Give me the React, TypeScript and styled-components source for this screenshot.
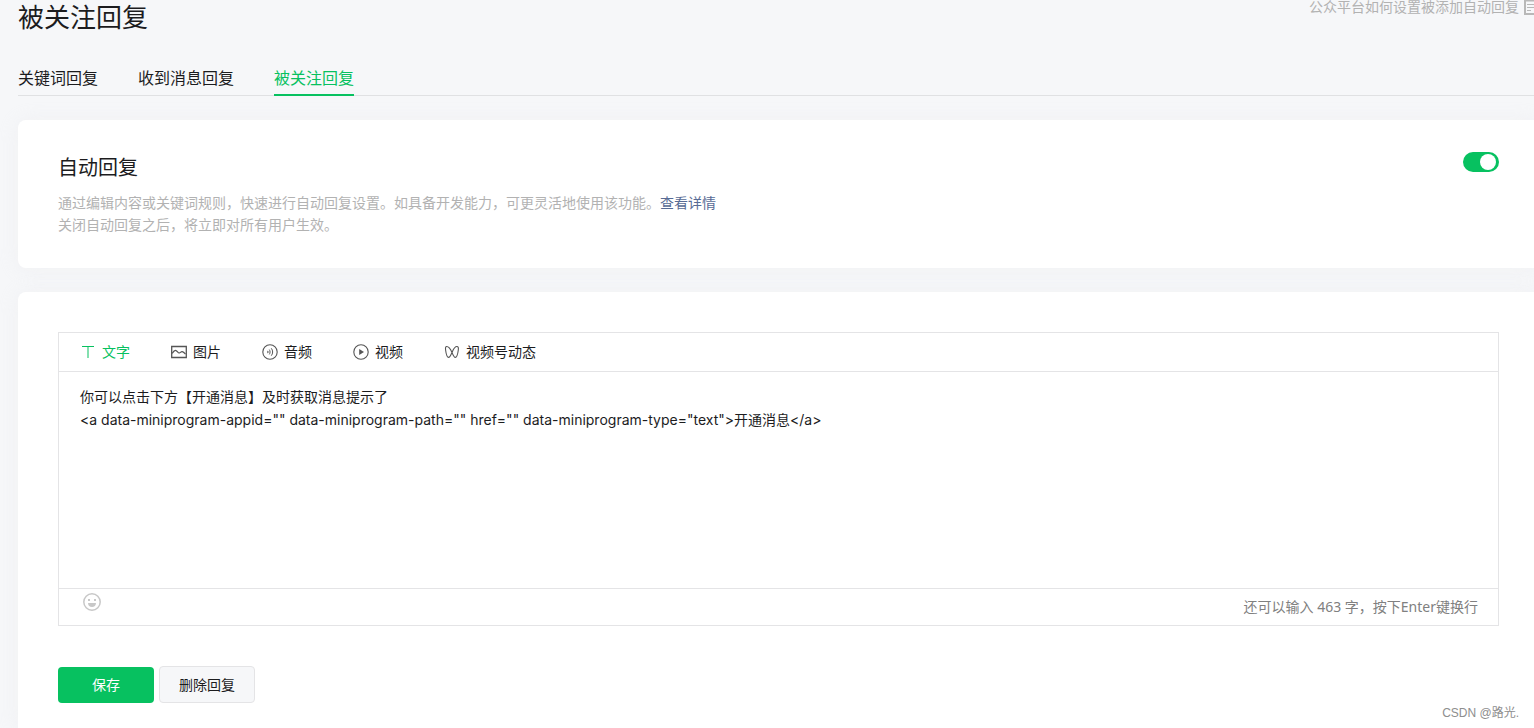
import React, { useState } from "react";
import styled, { createGlobalStyle } from "styled-components";

const green = "#07c160";
const line = "#e4e4e6";

const GlobalStyle = createGlobalStyle`
  * { box-sizing: border-box; }
  body {
    margin: 0;
    background: #f6f7f9;
    color: #1c1c1e;
    font-family: "Noto Sans", "Noto Sans CJK SC", sans-serif;
    font-size: 14px;
    line-height: 22px;
  }
  button, input, textarea { font: inherit; color: inherit; }
  a { text-decoration: none; }
`;

const Page = styled.div`
  position: relative;
  display: flex;
  flex-direction: column;
  min-height: 100vh;
  padding-left: 18px;
  overflow: hidden;
`;

const Header = styled.header`
  display: flex;
  justify-content: space-between;
  align-items: flex-start;
  height: 60px;
`;

const Title = styled.h1`
  margin: 0;
  font-size: 26px;
  line-height: 34px;
  font-weight: 400;
`;

const HelpLink = styled.a`
  display: flex;
  gap: 5px;
  color: #b2b2b2;
  line-height: 14px;
`;

const Tabs = styled.nav`
  display: flex;
  gap: 40px;
  height: 36px;
  border-bottom: 1px solid #e0e1e3;
`;

const Tab = styled.a<{ $active?: boolean }>`
  height: 36px;
  font-size: 16px;
  line-height: 36px;
  color: ${(p) => (p.$active ? green : "#1c1c1e")};
  border-bottom: ${(p) => (p.$active ? `2px solid ${green}` : "0")};
`;

const Card = styled.section`
  background: #fff;
  box-shadow: 0 1px 20px rgba(228, 228, 232, 0.3);
`;

const SettingCard = styled(Card)`
  display: flex;
  justify-content: space-between;
  align-items: flex-start;
  min-height: 148px;
  margin-top: 24px;
  padding: 32px 35px 32px 40px;
  border-radius: 8px 0 0 8px;
`;

const EditCard = styled(Card)`
  flex: 1;
  margin-top: 24px;
  padding: 40px 35px 25px 40px;
  border-radius: 8px 0 0 0;
`;

const CardTitle = styled.h2`
  margin: 0 0 8px;
  font-size: 20px;
  line-height: 32px;
  font-weight: 400;
`;

const Description = styled.p`
  margin: 0;
  color: #b2b2b2;
`;

const DetailLink = styled.a`
  color: #576b95;
`;

const Switch = styled.input`
  appearance: none;
  flex: none;
  width: 36px;
  height: 20px;
  margin: 0;
  padding: 2px 3px;
  display: flex;
  justify-content: flex-start;
  border-radius: 10px;
  background: #d8d8d8;
  cursor: pointer;
  &::before {
    content: "";
    width: 16px;
    height: 16px;
    border-radius: 50%;
    background: #fff;
  }
  &:checked {
    justify-content: flex-end;
    background: ${green};
  }
`;

const Editor = styled.div`
  border: 1px solid ${line};
`;

const Toolbar = styled.div`
  display: flex;
  gap: 41px;
  height: 39px;
  padding: 0 21px;
  border-bottom: 1px solid ${line};
`;

const Tool = styled.button<{ $active?: boolean }>`
  display: flex;
  align-items: center;
  gap: 6px;
  padding: 0;
  border: 0;
  background: none;
  white-space: nowrap;
  color: ${(p) => (p.$active ? green : "#1c1c1e")};
  cursor: pointer;
  svg { color: ${(p) => (p.$active ? green : "#555")}; }
`;

const TextArea = styled.textarea`
  display: block;
  width: 100%;
  height: 216px;
  padding: 13px 21px;
  border: 0;
  outline: 0;
  resize: none;
  background: #fff;
  font-family: Inter, "Noto Sans CJK SC", sans-serif;
  line-height: 23px;
`;

const EditorFooter = styled.div`
  display: flex;
  justify-content: space-between;
  height: 37px;
  padding: 4px 20px 0 24px;
  border-top: 1px solid ${line};
  color: #808080;
  line-height: 28px;
`;

const EmojiButton = styled.button`
  width: 18px;
  height: 18px;
  padding: 0;
  border: 0;
  background: none;
  svg { display: block; }
`;

const Actions = styled.div`
  display: flex;
  align-items: flex-end;
  gap: 5px;
  margin-top: 40px;
`;

const Button = styled.button<{ $primary?: boolean }>`
  width: 96px;
  height: ${(p) => (p.$primary ? "36px" : "37px")};
  padding: 0;
  border: ${(p) => (p.$primary ? "0" : `1px solid ${line}`)};
  border-radius: 4px;
  background: ${(p) => (p.$primary ? green : "#f6f7f9")};
  color: ${(p) => (p.$primary ? "#fff" : "#1c1c1e")};
  cursor: pointer;
`;

const Watermark = styled.span`
  position: absolute;
  right: 15px;
  bottom: 5px;
  color: #8e8e8e;
  font-family: "Liberation Sans", "Noto Sans CJK SC", sans-serif;
  font-size: 12px;
  line-height: 20px;
`;

const svgProps = { width: 16, height: 16, viewBox: "0 0 16 16", fill: "none", stroke: "currentColor", "aria-hidden": true };

const TextIcon = () => (
  <svg {...svgProps}>
    <path d="M2 2.5h12" />
    <path d="M8 3v11" strokeWidth="2" opacity=".5" />
  </svg>
);

const ImageIcon = () => (
  <svg {...svgProps}>
    <path d="M.7 2.5h14.600v11H.7z" strokeWidth="1.300" />
    <path d="M1.200 9.300C2.600 7.200 4.200 6 5.300 6.700c1.300.8 1.800 2.600 3 2.300 1-.2 1.700-1.500 2.900-1.300 1.300.2 2.300 1.300 3.300 2.500" strokeWidth="1.200" />
  </svg>
);

const AudioIcon = () => (
  <svg {...svgProps}>
    <circle cx="8" cy="8" r="7.2" strokeWidth="1.1" />
    <path d="M5.3 6.5v3L7 8z" fill="currentColor" stroke="none" />
    <path d="M7.3 5.6c1 1.400 1 3.400 0 4.800M9.300 4.300c1.800 2.200 1.800 5.200 0 7.400" />
  </svg>
);

const VideoIcon = () => (
  <svg {...svgProps}>
    <circle cx="8" cy="8" r="7.2" strokeWidth="1.1" />
    <path d="M6.200 5v6L11 8z" fill="currentColor" stroke="none" />
  </svg>
);

const ChannelIcon = () => (
  <svg {...svgProps}>
    <path
      d="M8 8.500C6.500 5 4.300 2.500 2.700 2.500 1.600 2.500 1.300 3.800 1.600 6c.4 3.200 1.700 7.400 3 7.400C5.800 13.400 7 10.800 8 8.500s2.200-6 4.900-6c1.400 0 1.700 1.300 1.400 3.500-.4 3.200-1.700 7.400-3 7.400-1.200 0-2.300-2.600-3.300-4.900z"
      strokeWidth="1.1"
    />
  </svg>
);

const EmojiIcon = () => (
  <svg width="18" height="18" viewBox="0 0 18 18" fill="none" aria-hidden>
    <circle cx="9" cy="9" r="8.200" stroke="#c8c8c8" strokeWidth="1.500" />
    <path d="M5 6h2v2H5zM11 6h2v2h-2z" fill="#c8c8c8" />
    <path d="M5 10h8c0 2.500-1.700 4-4 4s-4-1.500-4-4z" fill="#c8c8c8" />
  </svg>
);

const DocIcon = () => (
  <svg width="10" height="15" viewBox="0 0 10 15" fill="none" stroke="#b8b8b8" aria-hidden>
    <path d="M10 .5H1v13.500h9" strokeWidth="2" />
    <path d="M3 4.500h7M3 7.500h7M3 10.500h4" />
  </svg>
);

const tools = [
  { label: "文字", Icon: TextIcon },
  { label: "图片", Icon: ImageIcon },
  { label: "音频", Icon: AudioIcon },
  { label: "视频", Icon: VideoIcon },
  { label: "视频号动态", Icon: ChannelIcon },
];

const initialText =
  '你可以点击下方【开通消息】及时获取消息提示了\n<a data-miniprogram-appid="" data-miniprogram-path="" href="" data-miniprogram-type="text">开通消息</a>';

export default function App() {
  const [enabled, setEnabled] = useState(true);
  const [text, setText] = useState(initialText);
  const [tool, setTool] = useState("文字");

  return (
    <>
      <GlobalStyle />
      <Page>
        <Header>
          <Title>被关注回复</Title>
          <HelpLink href="#help">
            公众平台如何设置被添加自动回复
            <DocIcon />
          </HelpLink>
        </Header>
        <Tabs>
          <Tab href="#keyword">关键词回复</Tab>
          <Tab href="#message">收到消息回复</Tab>
          <Tab href="#follow" $active>被关注回复</Tab>
        </Tabs>
        <SettingCard>
          <div>
            <CardTitle>自动回复</CardTitle>
            <Description>
              通过编辑内容或关键词规则，快速进行自动回复设置。如具备开发能力，可更灵活地使用该功能。
              <DetailLink href="#detail">查看详情</DetailLink>
            </Description>
            <Description>关闭自动回复之后，将立即对所有用户生效。</Description>
          </div>
          <Switch
            type="checkbox"
            aria-label="自动回复"
            checked={enabled}
            onChange={(e) => setEnabled(e.target.checked)}
          />
        </SettingCard>
        <EditCard>
          <Editor>
            <Toolbar>
              {tools.map(({ label, Icon }) => (
                <Tool key={label} type="button" $active={tool === label} onClick={() => setTool(label)}>
                  <Icon />
                  {label}
                </Tool>
              ))}
            </Toolbar>
            <TextArea
              aria-label="回复内容"
              spellCheck={false}
              value={text}
              onChange={(e) => setText(e.target.value)}
            />
            <EditorFooter>
              <EmojiButton type="button" aria-label="表情">
                <EmojiIcon />
              </EmojiButton>
              <span>还可以输入 463 字，按下Enter键换行</span>
            </EditorFooter>
          </Editor>
          <Actions>
            <Button type="button" $primary>保存</Button>
            <Button type="button">删除回复</Button>
          </Actions>
        </EditCard>
        <Watermark>CSDN @路光.</Watermark>
      </Page>
    </>
  );
}
